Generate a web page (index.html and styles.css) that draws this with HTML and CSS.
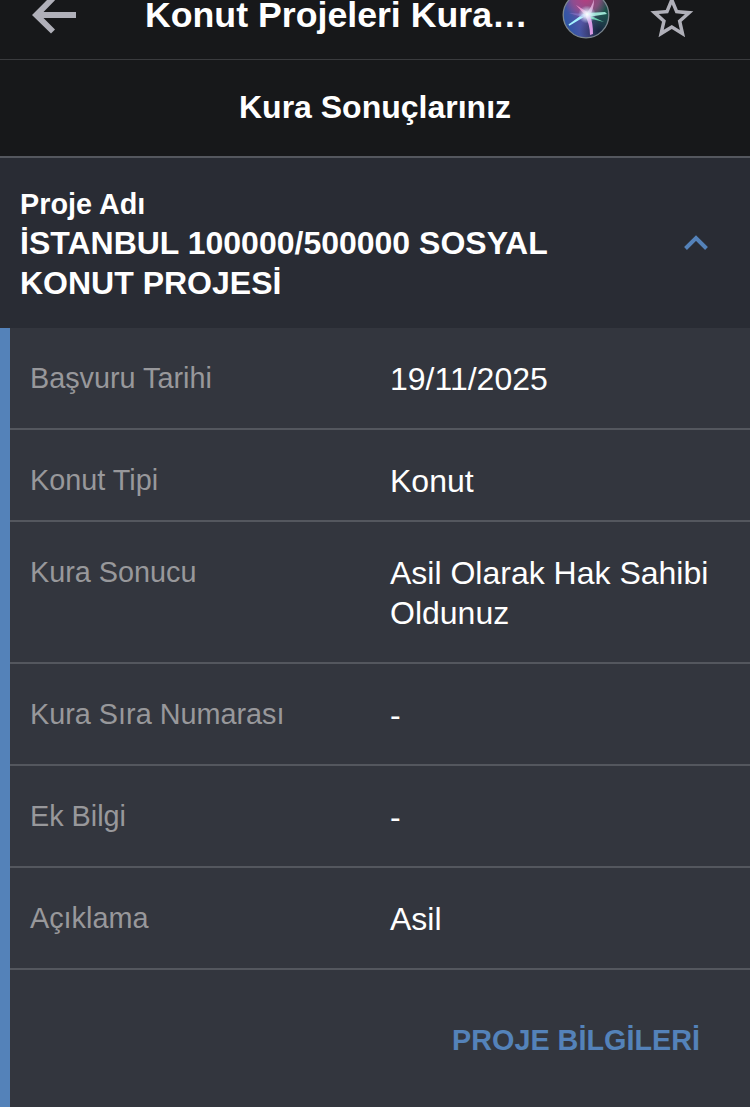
FILE: index.html
```
<!DOCTYPE html>
<html lang="tr">
<head>
<meta charset="utf-8">
<title>Konut Projeleri Kura Sonuçları</title>
<link rel="stylesheet" href="styles.css">
</head>
<body>
<header class="topbar">
  <svg class="back" viewBox="0 0 50 40" aria-label="Geri"><path d="M4 15L22.800 -3.800L27 0.300L15.500 12H48V18H15.500L27 29.500L23 33.500Z" fill="#b0b0b9"/></svg>
  <h1 class="title">Konut Projeleri Kura…</h1>
  <svg class="orb" viewBox="0 0 50 50">
    <defs>
      <linearGradient id="base" x1="0" y1=".7" x2="1" y2=".3"><stop offset="0" stop-color="#2755a5"/><stop offset=".45" stop-color="#5c55a5"/><stop offset=".7" stop-color="#285c58"/><stop offset="1" stop-color="#154b43"/></linearGradient>
      <radialGradient id="pink" cx=".5" cy=".12" r=".5"><stop offset="0" stop-color="#bd3b80"/><stop offset=".6" stop-color="#a14b89" stop-opacity=".75"/><stop offset="1" stop-color="#a14b89" stop-opacity="0"/></radialGradient>
      <radialGradient id="shade" cx=".78" cy=".86" r=".42"><stop offset="0" stop-color="#15223c"/><stop offset="1" stop-color="#15223c" stop-opacity="0"/></radialGradient>
      <radialGradient id="glow"><stop offset="0" stop-color="#fff"/><stop offset=".35" stop-color="#e8f4ff" stop-opacity=".8"/><stop offset="1" stop-color="#c7e5ff" stop-opacity="0"/></radialGradient>
      <filter id="soft"><feGaussianBlur stdDeviation=".6"/></filter>
    </defs>
    <circle cx="25" cy="24" r="23" fill="url(#base)"/>
    <circle cx="25" cy="24" r="23" fill="url(#pink)"/>
    <circle cx="25" cy="24" r="23" fill="url(#shade)"/>
    <g filter="url(#soft)">
      <path d="M28 22L8 34L22 24Z" fill="#a5f2ff" stroke="#a5f2ff" stroke-width="1.500"/>
      <path d="M24 24L15 14L28 22Z" fill="#e58bc7"/>
      <path d="M24 24Q31 16 33 8Q33 18 29 24Z" fill="#d7a0cf"/>
      <path d="M25 22L44 21L46 23L27 26Z" fill="#9de3d3"/>
      <path d="M26 23L43 31L27 27Z" fill="#69cfae"/>
      <path d="M24 24Q29 34 29 44L32 43Q32 32 29 24Z" fill="#d99be5"/>
      <path d="M26 23L8 22L24 27Z" fill="#8b79d0" opacity=".6"/>
    </g>
    <circle cx="26" cy="23.500" r="9" fill="url(#glow)"/>
    <circle cx="25" cy="24" r="22.800" fill="none" stroke="#7b858d" stroke-width="1.300"/>
  </svg>
  <svg class="star" viewBox="0 0 24 24" preserveAspectRatio="none"><path d="M22 9.240l-7.190-.620L12 2 9.190 8.630 2 9.240l5.460 4.730L5.820 21 12 17.270 18.180 21l-1.630-7.030L22 9.240zM12 15.400l-3.760 2.270 1-4.280-3.320-2.880 4.380-.380L12 6.100l1.710 4.040 4.380.380-3.320 2.880 1 4.280L12 15.400z" fill="#b0b0b9"/></svg>
</header>
<h2 class="heading">Kura Sonuçlarınız</h2>
<section class="project">
  <div class="project-name">
    <div class="caption">Proje Adı</div>
    <div class="name">İSTANBUL 100000/500000 SOSYAL<br>KONUT PROJESİ</div>
  </div>
  <svg class="chevron" viewBox="0 0 26 18"><path d="M2.500 14.500L13 4L23.500 14.500" fill="none" stroke="#5482b9" stroke-width="4"/></svg>
</section>
<main class="details">
  <dl class="rows">
    <div class="row"><dt>Başvuru Tarihi</dt><dd>19/11/2025</dd></div>
    <div class="row compact"><dt>Konut Tipi</dt><dd>Konut</dd></div>
    <div class="row"><dt>Kura Sonucu</dt><dd>Asil Olarak Hak Sahibi<br>Oldunuz</dd></div>
    <div class="row"><dt>Kura Sıra Numarası</dt><dd>-</dd></div>
    <div class="row"><dt>Ek Bilgi</dt><dd>-</dd></div>
    <div class="row"><dt>Açıklama</dt><dd>Asil</dd></div>
  </dl>
  <div class="actions"><a class="link">PROJE BİLGİLERİ</a></div>
</main>
</body>
</html>
```
FILE: styles.css
```
* { box-sizing: border-box; }
body {
  margin: 0;
  min-height: 1107px;
  display: flex;
  flex-direction: column;
  overflow: hidden;
  background: #17181a;
  color: #fff;
  font-family: "Liberation Sans", Arial, sans-serif;
}
h1, h2, dl, dd { margin: 0; }
.topbar {
  display: flex;
  align-items: flex-start;
  height: 60px;
  border-bottom: 1px solid #3a3b3e;
}
.back { width: 50px; height: 40px; margin-left: 28px; overflow: hidden; }
.title {
  width: 390px;
  margin-left: 67px;
  font-size: 35.700px;
  line-height: 30px;
  white-space: nowrap;
}
.orb { width: 50px; height: 50px; margin-left: 26px; margin-top: -9px; }
.star { width: 51.600px; height: 52.800px; margin-left: 35.200px; margin-top: -9.500px; }
.heading {
  height: 98px;
  padding-top: 27px;
  border-bottom: 2px solid #54575e;
  font-size: 32px;
  line-height: 40px;
  text-align: center;
}
.project {
  display: flex;
  align-items: center;
  justify-content: space-between;
  height: 170px;
  padding: 0 41px 0 20px;
  background: #292c34;
  font-weight: bold;
}
.project-name { padding-top: 2px; }
.caption { font-size: 28.800px; line-height: 38px; }
.name { font-size: 32px; line-height: 40px; white-space: nowrap; }
.chevron { width: 26px; height: 18px; }
.details {
  flex: 1;
  border-left: 10px solid #5482b9;
  background: #33363e;
}
.row {
  display: grid;
  grid-template-columns: 360px 1fr;
  padding: 31px 20px 29px 0;
  border-bottom: 2px solid #54575e;
  line-height: 40px;
}
.compact { padding-bottom: 19px; }
dt { padding-left: 20px; margin-top: -1px; color: #98989b; font-size: 28.800px; }
dd { padding-left: 20px; font-size: 32px; white-space: nowrap; }
.actions { padding: 50px 50px 0; text-align: right; }
.link { color: #5482b9; font-size: 28.800px; line-height: 40px; font-weight: bold; }
```
